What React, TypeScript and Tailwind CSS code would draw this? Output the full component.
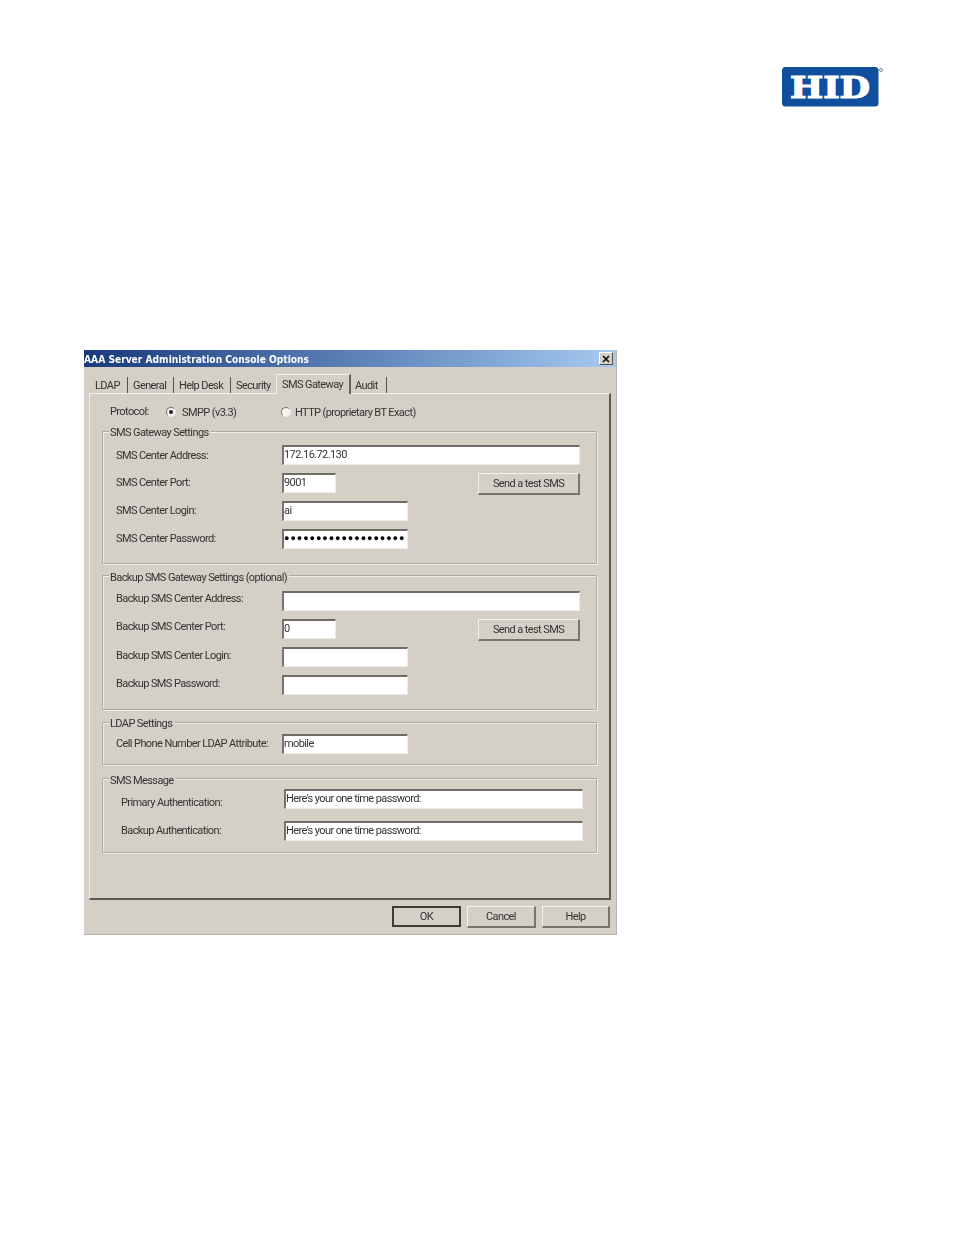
import type { ReactNode } from 'react';

const TABS = [
  { label: 'LDAP', width: 'w-[38px]' },
  { label: 'General', width: 'w-[46px]' },
  { label: 'Help Desk', width: 'w-[57px]' },
  { label: 'Security', width: 'w-[46px]' },
];

function Field({ value, width, password }: { value?: string; width: string; password?: boolean }) {
  return (
    <div
      className={`${width} h-[20px] bg-white border-t-2 border-l-2 border-t-[#6e6c66] border-l-[#77756f] border-r border-b border-r-[#ecebe6] border-b-[#ecebe6] pb-[1px] flex items-center overflow-hidden whitespace-nowrap ${
        password ? 'text-[9px] tracking-[0.95px] text-black' : ''
      }`}
    >
      {password ? '●'.repeat(19) : value}
    </div>
  );
}

function Button({ label, width, isDefault }: { label: string; width: string; isDefault?: boolean }) {
  return (
    <div
      className={`${width} pt-[2px] flex items-center justify-center bg-[#d4d0c8] ${
        isDefault
          ? 'h-[21px] border-2 border-[#3c3b38]'
          : 'h-[22px] border-t border-l border-t-[#f2f1ed] border-l-[#f2f1ed] border-r-2 border-b-2 border-r-[#77756f] border-b-[#77756f]'
      }`}
    >
      {label}
    </div>
  );
}

function Row({
  label,
  labelWidth = 'w-[166px]',
  labelNudge = 'mt-[1px]',
  children,
}: {
  label: string;
  labelWidth?: string;
  labelNudge?: string;
  children: ReactNode;
}) {
  return (
    <div className="flex items-center h-[20px]">
      <span className={`${labelWidth} ${labelNudge} shrink-0 whitespace-nowrap`}>{label}</span>
      {children}
    </div>
  );
}

function Group({
  title,
  titleTop = '-top-[6px]',
  className,
  children,
}: {
  title: string;
  titleTop?: string;
  className: string;
  children: ReactNode;
}) {
  return (
    <div className={`relative border border-[#aeaba3] shadow-[inset_1px_1px_0_#eeede9,1px_1px_0_#eeede9] rounded-[1px] ${className}`}>
      <span className={`absolute left-[6px] ${titleTop} bg-[#d4d0c8] pl-[1px] pr-[2px] leading-[14px] whitespace-nowrap`}>{title}</span>
      {children}
    </div>
  );
}

function Radio({ checked }: { checked?: boolean }) {
  return (
    <span className="w-[10px] h-[10px] -mt-[1px] shrink-0 rounded-full bg-[#f4f3f0] border border-t-[#77756f] border-l-[#77756f] border-r-[#eeede9] border-b-[#eeede9] flex items-center justify-center">
      {checked && <span className="w-[4px] h-[4px] rounded-full bg-[#222]" />}
    </span>
  );
}

function HidLogo() {
  return (
    <svg width="102" height="40" viewBox="0 0 102 40">
      <rect x="0" y="0" width="96.5" height="39.5" rx="3.5" fill="#0f4f9e" />
      <text
        x="48"
        y="31"
        textAnchor="middle"
        textLength="80"
        lengthAdjust="spacingAndGlyphs"
        fontFamily="'DejaVu Serif', serif"
        fontWeight="700"
        fontSize="30"
        fill="#fff"
        stroke="#fff"
        strokeWidth="1.2"
      >
        HID
      </text>
      <circle cx="99" cy="3" r="1.5" fill="none" stroke="#555" strokeWidth="0.7" />
    </svg>
  );
}

export default function App() {
  return (
    <div className="w-[954px] h-[1235px] bg-white overflow-hidden font-['Roboto',sans-serif]">
      <div className="flex justify-end pt-[67px] pr-[70px] h-[350px]">
        <HidLogo />
      </div>

      <div className="ml-[84px] w-[533px] h-[585px] bg-[#d4d0c8] border-r border-b border-[#b5b2aa] text-[11px] tracking-[-0.6px] text-[#333] blur-[0.45px] flex flex-col">
        {/* title bar */}
        <div className="h-[17px] shrink-0 flex items-center justify-between bg-gradient-to-r from-[#1a3a7c] to-[#a6caf0] pr-[3px]">
          <span className="mt-[2px] text-white font-bold text-[10.5px] tracking-[0px] font-['DejaVu_Sans',sans-serif] scale-x-[0.87] origin-left whitespace-nowrap">
            AAA Server Administration Console Options
          </span>
          <span className="w-[14px] h-[13px] bg-[#d4d0c8] border-r border-b border-[#55534e] border-t border-l border-t-white border-l-white flex items-center justify-center">
            <svg width="8" height="8" viewBox="0 0 8 8">
              <path d="M1 1l6 6M7 1l-6 6" stroke="#111" strokeWidth="1.7" />
            </svg>
          </span>
        </div>

        {/* tabs */}
        <div className="h-[26px] shrink-0 flex items-end pl-[5px]">
          {TABS.map((tab, i) => (
            <div
              key={tab.label}
              className={`${tab.width} h-[16px] pt-[2px] flex items-center whitespace-nowrap ${
                i === 0 ? 'pl-[6px]' : 'pl-[5px] border-l border-l-[#55534e]'
              }`}
            >
              {tab.label}
            </div>
          ))}
          <div className="w-[75px] h-[20px] -mb-[1px] relative flex items-center pl-[5px] pt-[1px] bg-[#d4d0c8] border-t border-l border-[#f1f0ec] border-r-2 border-r-[#66645f] whitespace-nowrap">
            SMS Gateway
          </div>
          <div className="w-[36px] h-[16px] pt-[2px] flex items-center pl-[4px] border-r border-r-[#55534e]">Audit</div>
        </div>

        {/* tab panel */}
        <div className="mx-[5px] w-[522px] h-[507px] shrink-0 border-t border-l border-t-[#f1f0ec] border-l-[#f1f0ec] border-r-2 border-b-2 border-r-[#5c5a55] border-b-[#5c5a55] pl-[12px]">
          <div className="h-[37px] flex items-center pl-[8px]">
            <span className="w-[56px] -mt-[1px]">Protocol:</span>
            <Radio checked />
            <span className="ml-[6px] mt-[2px] w-[99px]">SMPP (v3.3)</span>
            <Radio />
            <span className="ml-[4px] mt-[2px]">HTTP (proprietary BT Exact)</span>
          </div>

          <div className="w-[495px] flex flex-col gap-[11px]">
            <Group title="SMS Gateway Settings" className="h-[133px] pl-[13px] pt-[13px] pr-[16px] flex flex-col gap-[8px]">
              <Row label="SMS Center Address:" labelNudge="mt-[3px]">
                <Field value="172.16.72.130" width="w-[298px]" />
              </Row>
              <Row label="SMS Center Port:">
                <Field value="9001" width="w-[54px]" />
                <div className="ml-auto mt-[2px]">
                  <Button label="Send a test SMS" width="w-[102px]" />
                </div>
              </Row>
              <Row label="SMS Center Login:">
                <Field value="ai" width="w-[126px]" />
              </Row>
              <Row label="SMS Center Password:">
                <Field width="w-[126px]" password />
              </Row>
            </Group>

            <Group title="Backup SMS Gateway Settings (optional)" titleTop="-top-[5px]" className="h-[135px] pl-[13px] pt-[15px] pr-[16px] flex flex-col gap-[8px]">
              <Row label="Backup SMS Center Address:" labelNudge="mb-[3px]">
                <Field width="w-[298px]" />
              </Row>
              <Row label="Backup SMS Center Port:" labelNudge="mb-[3px]">
                <Field value="0" width="w-[54px]" />
                <div className="ml-auto mt-[2px]">
                  <Button label="Send a test SMS" width="w-[102px]" />
                </div>
              </Row>
              <Row label="Backup SMS Center Login:" labelNudge="mb-[1px]">
                <Field width="w-[126px]" />
              </Row>
              <Row label="Backup SMS Password:" labelNudge="mb-[1px]">
                <Field width="w-[126px]" />
              </Row>
            </Group>

            <Group title="LDAP Settings" className="h-[43px] mt-[1px] pl-[13px] pt-[11px] pr-[16px]">
              <Row label="Cell Phone Number LDAP Attribute:">
                <Field value="mobile" width="w-[126px]" />
              </Row>
            </Group>

            <Group title="SMS Message" titleTop="-top-[5px]" className="h-[75px] mt-[2px] pl-[18px] pt-[10px] pr-[13px] flex flex-col gap-[12px]">
              <Row label="Primary Authentication:" labelWidth="w-[163px]" labelNudge="mt-[9px]">
                <Field value="Here's your one time password:" width="w-[299px]" />
              </Row>
              <Row label="Backup Authentication:" labelWidth="w-[163px]">
                <Field value="Here's your one time password:" width="w-[299px]" />
              </Row>
            </Group>
          </div>
        </div>

        {/* bottom buttons */}
        <div className="flex justify-end gap-[6px] pr-[6px] pt-[6px]">
          <Button label="OK" width="w-[69px]" isDefault />
          <Button label="Cancel" width="w-[69px]" />
          <Button label="Help" width="w-[68px]" />
        </div>
      </div>
    </div>
  );
}
